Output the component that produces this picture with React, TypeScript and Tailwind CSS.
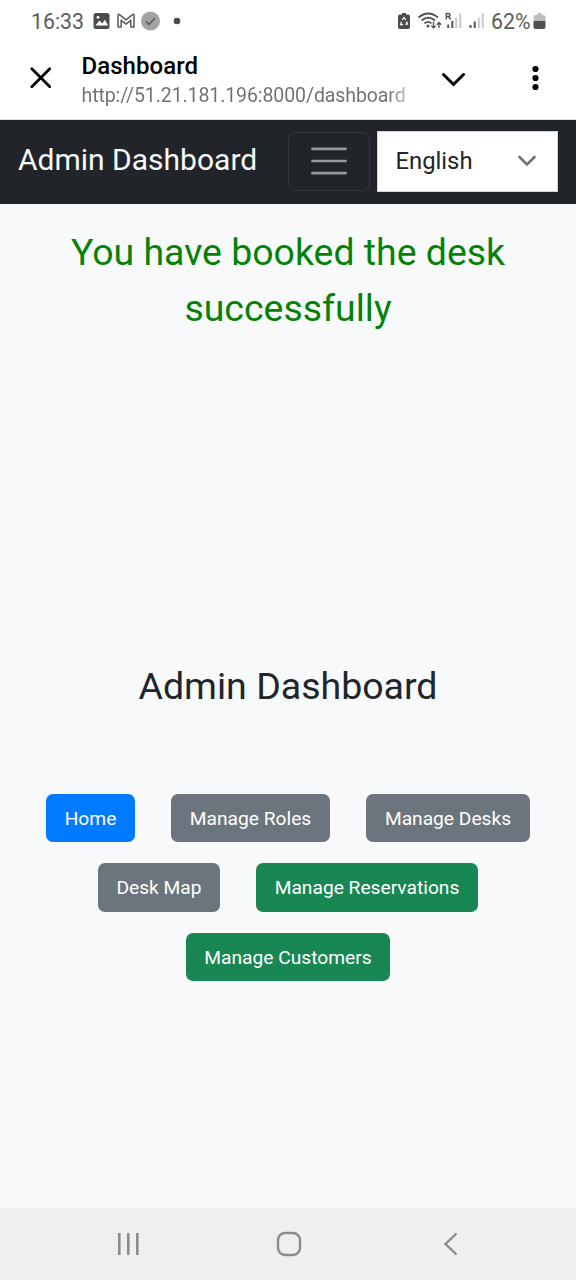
import type { ReactNode } from 'react';

function StatusBar() {
  return (
    <div className="flex h-[42px] shrink-0 items-center pt-px pl-[31px] pr-[30px] text-[21.300px] leading-none text-[#5c5c5c]">
      <span className="w-[62px] whitespace-nowrap">16:33</span>
      <svg className="-mt-px" width="90" height="22" viewBox="93 10 90 22" fill="none">
        <rect x="93.500" y="13" width="16" height="16" rx="2.500" fill="#4c4c4c" />
        <path d="M95.500 25.500l4-5 2.800 3 2.600-3.700 3.200 5.700z" fill="#fff" />
        <circle cx="98" cy="17.300" r="1.400" fill="#fff" />
        <path d="M118 27V15.300q0-1.500 1.500-.6l6.500 5.100 6.500-5.100q1.500-.9 1.500.6V27h-3.200v-6.700l-4.800 3.800-4.800-3.800V27z" stroke="#5a5a5a" strokeWidth="1.500" strokeLinejoin="round" />
        <circle cx="150.500" cy="21" r="9.500" fill="#a3a3a3" />
        <path d="M146 21.500l3 3 6-6.500" stroke="#555" strokeWidth="1.500" />
        <circle cx="177" cy="21" r="3.300" fill="#4c4c4c" />
      </svg>
      <div className="ml-auto flex items-center">
        <svg className="-mt-px" width="94" height="22" viewBox="397 10 94 22" fill="none">
          <path d="M400 14.500h2V13h4v1.500h2q2 0 2 2V27q0 2-2 2h-8q-2 0-2-2V16.500q0-2 2-2z" fill="#4c4c4c" />
          <path d="M402.200 20l1.800-2.500 1.800 2.500M406.500 21.500l1 2.700h-2.300M403 24.700h-2.500l1-3" stroke="#fff" strokeWidth="1.200" />
          <g stroke="#505050" strokeWidth="1.700">
            <path d="M418.500 17.500q10-8 19.500 0M421.500 20.500q6.800-5.700 13.500 0M424.500 23.500q3.800-3.300 7 0" />
            <path d="M433.500 21.500v6M431.300 25.600l2.200 2.300 2.200-2.300M439 28v-5.500M436.900 24.700l2.100-2.300 2.100 2.300" strokeWidth="1.300" />
          </g>
          <circle cx="428" cy="26" r="1.500" fill="#505050" />
          <path d="M446.300 19.500v-6h2q1.800 0 1.800 1.500t-1.800 1.500h-2M448.500 16.500l2.200 3" stroke="#505050" strokeWidth="1.400" />
          <path d="M448.200 24.500V28M452.300 21v7M470.500 25v3M474.700 21.500V28" stroke="#555" strokeWidth="2" />
          <path d="M456.200 17.500V28M460.200 13.500V28M478.800 17.500V28M482.700 13.500V28" stroke="#c9c9c9" strokeWidth="2" />
        </svg>
        <span className="w-[41px] whitespace-nowrap">62%</span>
        <svg className="-mt-px" width="14" height="22" viewBox="532 10 14 22">
          <path d="M535.500 15h2v-2h4v2h2q2 0 2 2v4h-12v-4q0-2 2-2z" fill="#bdbdbd" />
          <path d="M533.500 21h12v6q0 2-2 2h-8q-2 0-2-2z" fill="#505050" />
        </svg>
      </div>
    </div>
  );
}

function BrowserBar() {
  return (
    <header className="flex h-[78px] shrink-0 border-b border-[#dcdde0]">
      <svg className="mt-[25px] ml-[30px]" width="21" height="21" viewBox="0 0 21 21" fill="none" stroke="#000" strokeWidth="2.700" strokeLinecap="round">
        <path d="M1.800 1.700l18 18M19.800 1.700l-18 18" />
      </svg>
      <div className="ml-[30.500px] w-[325.500px] whitespace-nowrap">
        <div className="mt-[9px] text-[24px] leading-[30px] font-medium tracking-[0.05px] text-black">Dashboard</div>
        <div className="w-[325px] bg-linear-to-r from-[#707070] from-94% to-[#c8c8c8] bg-clip-text text-[19.500px] leading-[29px] tracking-[-0.090px] text-transparent">
          http://51.21.181.196:8000/dashboard
        </div>
      </div>
      <svg className="mt-[29.500px] ml-[34px]" width="24" height="16" viewBox="0 0 24 16" fill="none" stroke="#000" strokeWidth="3" strokeLinecap="round">
        <path d="M2.500 2.500l10 10 10-10" />
      </svg>
      <svg className="mt-[22px] ml-[66px]" width="10" height="28" viewBox="0 0 10 28">
        <circle cx="4.500" cy="5" r="3.100" />
        <circle cx="4.500" cy="14" r="3.100" />
        <circle cx="4.500" cy="23" r="3.100" />
      </svg>
    </header>
  );
}

function NavBar() {
  return (
    <nav className="flex h-[84px] shrink-0 items-center bg-[#212529] pr-[18px] pb-[2px] pl-[18px]">
      <span className="mb-[3px] text-[30px] whitespace-nowrap text-[#f8f9fa]">Admin Dashboard</span>
      <button aria-label="Menu" className="ml-auto flex h-[59px] w-[82px] items-center justify-center rounded-[8px] border border-[#34383c]">
        <svg width="36" height="28" viewBox="0 0 36 28" stroke="#97999c" strokeWidth="2.700" strokeLinecap="round">
          <path d="M1.400 1.800h33.200M1.400 14h33.200M1.400 26.200h33.200" />
        </svg>
      </button>
      <button className="ml-[7px] flex h-[61px] w-[181px] items-center justify-between border border-[#ced4da] bg-white pr-[20px] pl-[17.500px] text-[23.800px] text-[#212529]">
        <span className="pt-[2px]">English</span>
        <svg width="20" height="12" viewBox="0 0 20 12" fill="none" stroke="#6c757d" strokeWidth="2.600" strokeLinecap="round" strokeLinejoin="round">
          <path d="M2.500 2l7.500 7.500L17.500 2" />
        </svg>
      </button>
    </nav>
  );
}

function Action({ tone, children }: { tone: string; children: ReactNode }) {
  return (
    <button className={`flex h-[48.300px] items-center justify-center rounded-[7px] pt-[2px] text-[19.200px] whitespace-nowrap text-white ${tone}`}>
      {children}
    </button>
  );
}

function SystemNav() {
  return (
    <footer className="flex h-[72px] shrink-0 items-center bg-[#efefef] pl-[117px]">
      <svg width="23" height="24" viewBox="0 0 23 24" stroke="#8b8b8b" strokeWidth="2.600">
        <path d="M2.300 1v22M11.300 1v22M20.300 1v22" />
      </svg>
      <svg className="ml-[136px]" width="26" height="26" viewBox="0 0 26 26" fill="none" stroke="#8b8b8b" strokeWidth="2.400">
        <rect x="2" y="2" width="22" height="22" rx="7" />
      </svg>
      <svg className="ml-[141px]" width="15" height="24" viewBox="0 0 15 24" fill="none" stroke="#8b8b8b" strokeWidth="2.400">
        <path d="M13.500 1.500L2.500 12l11 10.500" />
      </svg>
    </footer>
  );
}

export default function App() {
  return (
    <div className="flex h-[1280px] w-[576px] flex-col overflow-hidden bg-white font-['Roboto',sans-serif]">
      <StatusBar />
      <BrowserBar />
      <NavBar />
      <main className="flex flex-1 flex-col items-center bg-[#f8f9fb] text-center">
        <p className="mt-[20px] text-[37.450px] leading-[56px] text-[#058205]">
          You have booked the desk
          <br />
          successfully
        </p>
        <h1 className="mt-[322px] text-[37.500px] leading-[56px] text-[#212529]">Admin Dashboard</h1>
        <div className="mt-[79.800px] flex flex-col items-center gap-[21.200px]">
          <div className="flex gap-[36px]">
            <Action tone="w-[89px] bg-[#007bff]">Home</Action>
            <Action tone="w-[159px] bg-[#6c757d]">Manage Roles</Action>
            <Action tone="w-[164px] bg-[#6c757d]">Manage Desks</Action>
          </div>
          <div className="flex gap-[36px]">
            <Action tone="w-[122px] bg-[#6c757d]">Desk Map</Action>
            <Action tone="w-[222px] bg-[#198754]">Manage Reservations</Action>
          </div>
          <Action tone="w-[204px] bg-[#198754]">Manage Customers</Action>
        </div>
      </main>
      <SystemNav />
    </div>
  );
}
